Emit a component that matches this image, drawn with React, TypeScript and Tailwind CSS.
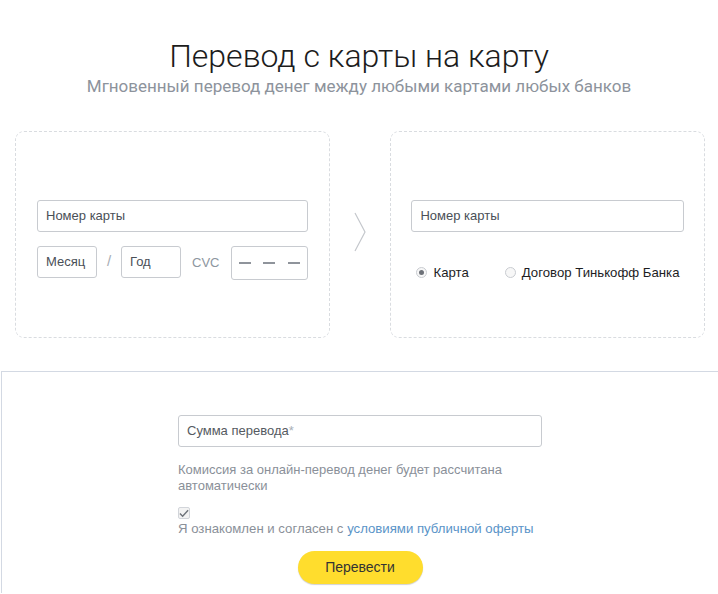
import React from 'react';

const field =
  "h-[32px] rounded-[3px] border border-[#c8cbd0] bg-white px-[8px] flex items-center text-[13px] text-[#4a4f57]";

function Radio({ checked, label }: { checked?: boolean; label: string }) {
  return (
    <div className="flex items-center gap-[6px]">
      <span className="w-[11px] h-[11px] rounded-full border border-[#c9ccd1] bg-[#f7f7f7] flex items-center justify-center">
        {checked && <span className="w-[5px] h-[5px] rounded-full bg-[#6d7178]" />}
      </span>
      <span className="text-[13.2px] text-[#1d1d1f]">{label}</span>
    </div>
  );
}

export default function App() {
  return (
    <div className="min-h-[594px] bg-white font-['Liberation_Sans',Arial,sans-serif]">
      <header className="pt-[36px] text-center font-['Roboto',sans-serif]">
        <h1 className="text-[32px] leading-[40px] font-light text-[#1c1c1c]">Перевод с карты на карту</h1>
        <p className="text-[17px] leading-[20px] text-[#8d939c]">Мгновенный перевод денег между любыми картами любых банков</p>
      </header>

      <div className="ml-[15px] w-[690px] mt-[35px] flex items-start">
        <div className="w-[315px] h-[207px] rounded-[9px] border border-dashed border-[#d9dce0] pt-[68px] px-[21px]">
          <div className={field}>Номер карты</div>
          <div className="mt-[14px] flex items-start">
            <div className={`${field} w-[60px]`}>Месяц</div>
            <span className="w-[24px] text-center leading-[30px] text-[15px] text-[#a7adb5]">/</span>
            <div className={`${field} w-[60px]`}>Год</div>
            <span className="ml-[11px] leading-[34px] text-[13px] text-[#8d96a0]">CVC</span>
            <div className="ml-auto h-[34px] w-[77px] rounded-[3px] border border-[#c8cbd0] flex items-center justify-between px-[7px]">
              <span className="w-[12px] h-[2px] bg-[#8f949b]" />
              <span className="w-[12px] h-[2px] bg-[#8f949b]" />
              <span className="w-[12px] h-[2px] bg-[#8f949b]" />
            </div>
          </div>
        </div>

        <div className="w-[61px] flex justify-center pt-[81px]">
          <svg width="14" height="40" viewBox="0 0 14 40" fill="none">
            <path d="M2 1 L12 20 L2 39" stroke="#c4c7cc" strokeWidth="1.2" />
          </svg>
        </div>

        <div className="w-[315px] h-[207px] rounded-[9px] border border-dashed border-[#d9dce0] pt-[68px] px-[20px]">
          <div className={field}>Номер карты</div>
          <div className="mt-[31px] flex items-center gap-[36px] pl-[5px]">
            <Radio checked label="Карта" />
            <Radio label="Договор Тинькофф Банка" />
          </div>
        </div>
      </div>

      <section className="ml-px mt-[33px] border-l border-t border-[#d3d9e3] pb-[9px]">
        <div className="mx-auto w-[364px] pt-[43px]">
          <div className={`${field} text-[#555a61]`}>
            Сумма перевода<span className="text-[#a9aeb5]">*</span>
          </div>
          <p className="mt-[15px] text-[13px] leading-[16px] text-[#8a9099]">
            Комиссия за онлайн-перевод денег будет рассчитана автоматически
          </p>
          <div className="mt-[13px] w-[12px] h-[12px] rounded-[2px] border border-[#d2d5da] bg-[#f3f3f3] flex items-center justify-center">
            <svg width="11" height="9" viewBox="0 0 11 9" fill="none">
              <path d="M1 4.5 L4 7.5 L10 1" stroke="#6f747b" strokeWidth="1.6" />
            </svg>
          </div>
          <p className="mt-[2px] text-[13.2px] leading-[16px] text-[#8a9099]">
            Я ознакомлен и согласен с <span className="text-[#5a94c8]">условиями публичной оферты</span>
          </p>
          <div className="mt-[14px] flex justify-center">
            <button className="h-[33px] w-[125px] rounded-full bg-[#ffdd2d] text-[14px] text-[#333] shadow-[0_1px_1px_rgba(0,0,0,0.18)]">
              Перевести
            </button>
          </div>
        </div>
      </section>
    </div>
  );
}
